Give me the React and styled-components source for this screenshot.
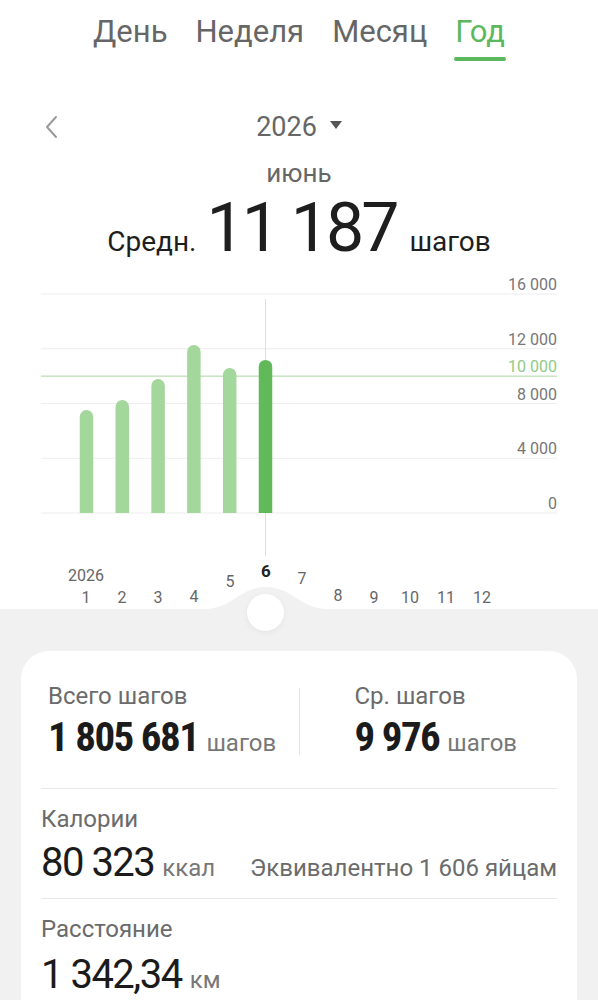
import React from 'react'
import styled, { createGlobalStyle } from 'styled-components'

const GlobalStyle = createGlobalStyle`
  * { box-sizing: border-box; }
  body {
    margin: 0;
    background: #fff;
    font-family: Roboto, "Noto Sans", sans-serif;
  }
`

const GREEN = '#5cb85c'

const Page = styled.div`
  width: 598px;
  height: 1000px;
  overflow: hidden;
`

const Tabs = styled.nav`
  display: flex;
  justify-content: center;
  gap: 28px;
  padding-top: 14px;
`

const Tab = styled.div`
  font-size: 31px;
  line-height: 36px;
  color: ${p => (p.$active ? GREEN : '#666')};
  padding-bottom: 11px;
  position: relative;

  &::after {
    content: '';
    display: ${p => (p.$active ? 'block' : 'none')};
    position: absolute;
    left: -1px;
    right: -1px;
    bottom: 0;
    height: 4px;
    border-radius: 2px;
    background: ${GREEN};
  }
`

const YearRow = styled.div`
  display: grid;
  grid-template-columns: 1fr auto 1fr;
  align-items: center;
  margin-top: 50px;
`

const BackButton = styled.div`
  padding-left: 44px;
  display: flex;
  align-items: center;
`

const YearPicker = styled.div`
  display: flex;
  align-items: center;
  gap: 13px;
  font-size: 27px;
  line-height: 32px;
  color: #666;
`

const Caret = styled.span`
  width: 0;
  height: 0;
  border-left: 6px solid transparent;
  border-right: 6px solid transparent;
  border-top: 8px solid #555;
  margin-top: -4px;
`

const MonthName = styled.div`
  margin-top: 15px;
  text-align: center;
  font-size: 26px;
  line-height: 30px;
  color: #666;
`

const AvgRow = styled.div`
  margin-top: 4px;
  display: flex;
  justify-content: center;
  align-items: baseline;
  gap: 10px;
  color: #1e1e1e;
  line-height: 72px;
`

const AvgCaption = styled.span`
  font-size: 28px;
`

const AvgValue = styled.span`
  font-size: 68px;
  letter-spacing: -3px;
  margin-right: 3px;
`

const ChartSvg = styled.svg`
  display: block;
  margin-top: -9px;
`

const Months = styled.div`
  display: grid;
  grid-template-columns: repeat(12, 36px);
  padding-left: 68px;
  height: 50px;
  align-items: end;
  padding-bottom: 2px;
  position: relative;
  z-index: 2;
`

const MonthCell = styled.div`
  display: flex;
  flex-direction: column;
  align-items: center;
  gap: 4px;
`

const MonthNum = styled.span`
  font-size: ${p => (p.$active ? '17px' : '16px')};
  font-weight: ${p => (p.$active ? 700 : 400)};
  line-height: 18px;
  color: ${p => (p.$active ? '#222' : '#666')};
`

const Sheet = styled.div`
  min-height: 420px;
  background: #f1f1f1;
  position: relative;
  padding: 42px 21px 0;
`

const Bump = styled.svg`
  position: absolute;
  left: 204px;
  top: -23px;
`

const Knob = styled.div`
  position: absolute;
  left: 247px;
  top: -15px;
  width: 37px;
  height: 37px;
  border-radius: 50%;
  background: #fff;
  box-shadow: 0 2px 6px rgba(0, 0, 0, 0.05);
`

const Card = styled.div`
  background: #fff;
  border-radius: 28px;
  padding: 0 20px 40px;
`

const StatsRow = styled.div`
  display: grid;
  grid-template-columns: 1fr 1px 1fr;
  padding: 31px 0 23px;
  border-bottom: 1px solid #e8e8e8;
`

const StatCol = styled.div`
  padding-left: ${p => p.$inset}px;
`

const VDivider = styled.div`
  background: #e6e6e6;
  margin: 6px 0 10px;
`

const Section = styled.div`
  padding: 16px 0 ${p => (p.$last ? 13 : 8)}px;
  border-bottom: ${p => (p.$last ? 'none' : '1px solid #e8e8e8')};
`

const Label = styled.div`
  font-size: 24px;
  line-height: 28px;
  color: #6b6b6b;
`

const ValueLine = styled.div`
  display: flex;
  align-items: baseline;
  gap: 8px;
  margin-top: ${p => p.$gap}px;
  line-height: 44px;
`

const BigBold = styled.span`
  font-family: "Liberation Sans Narrow", "Roboto Condensed", Roboto, sans-serif;
  font-weight: 700;
  font-size: 41px;
  letter-spacing: -1.5px;
  color: #1b1b1b;
`

const BigValue = styled.span`
  font-size: 40px;
  letter-spacing: -1.5px;
  color: #1b1b1b;
`

const Unit = styled.span`
  font-size: 24px;
  color: #777;
`

const Note = styled.span`
  margin-left: auto;
  font-size: 24px;
  color: #6b6b6b;
`

// monthly averages, Jan..Jun
const steps = [7530, 8250, 9790, 12270, 10590, 11187]
const selected = 5
const labelShift = [0, 0, 0, -1, -16, -27, -19, -2, 0, 0, 0, 0]

const MAX = 16000
const BASE = 244
const SCALE = 219 / MAX
const yOf = v => BASE - v * SCALE
const xOf = i => 86.5 + i * 35.8

const barPath = (cx, top, w) => {
  const r = w / 2
  const l = cx - r
  return `M${l} ${BASE} V${top + r} A${r} ${r} 0 0 1 ${l + w} ${top + r} V${BASE} Z`
}

const Chart = () => (
  <ChartSvg width="598" height="290" viewBox="0 0 598 290">
    {[0, 4000, 8000, 12000, 16000].map(v => (
      <g key={v}>
        <line x1="41" x2="557" y1={yOf(v)} y2={yOf(v)} stroke="#ededed" strokeWidth="1" />
        <text x="557" y={yOf(v) - 4} textAnchor="end" fontSize="16" fill="#777" fontFamily="Roboto">
          {v === 0 ? '0' : v.toLocaleString('ru-RU').replace(/\s/g, ' ')}
        </text>
      </g>
    ))}
    <line x1="41" x2="557" y1={yOf(10000)} y2={yOf(10000)} stroke="#a9d6a2" strokeWidth="1" />
    <text x="557" y={yOf(10000) - 4} textAnchor="end" fontSize="16" fill="#8fcb86" fontFamily="Roboto">
      10 000
    </text>
    <line x1={xOf(selected)} x2={xOf(selected)} y1="30" y2="287" stroke="#cfe9ca" strokeWidth="1" />
    {steps.map((v, i) => (
      <path key={i} d={barPath(xOf(i), yOf(v), 13.5)} fill={i === selected ? '#62b95a' : '#a4d79c'} />
    ))}
  </ChartSvg>
)

const App = () => (
  <Page>
    <GlobalStyle />
    <Tabs>
      <Tab>День</Tab>
      <Tab>Неделя</Tab>
      <Tab>Месяц</Tab>
      <Tab $active>Год</Tab>
    </Tabs>

    <YearRow>
      <BackButton>
        <svg width="14" height="24" viewBox="0 0 14 24">
          <polyline points="12,2 3,12 12,22" fill="none" stroke="#9a9a9a" strokeWidth="2" strokeLinecap="round" strokeLinejoin="round" />
        </svg>
      </BackButton>
      <YearPicker>
        2026
        <Caret />
      </YearPicker>
      <div />
    </YearRow>

    <MonthName>июнь</MonthName>
    <AvgRow>
      <AvgCaption>Средн.</AvgCaption>
      <AvgValue>11 187</AvgValue>
      <AvgCaption>шагов</AvgCaption>
    </AvgRow>

    <Chart />

    <Months>
      {labelShift.map((dy, i) => (
        <MonthCell key={i} style={{ transform: `translateY(${dy}px)` }}>
          {i === 0 && <MonthNum>2026</MonthNum>}
          <MonthNum $active={i === selected}>{i + 1}</MonthNum>
        </MonthCell>
      ))}
    </Months>

    <Sheet>
      <Bump width="124" height="26" viewBox="0 0 124 26">
        <path d="M0 23 C 28 23, 36 1, 62 1 C 88 1, 96 23, 124 23 V26 H0 Z" fill="#f1f1f1" />
      </Bump>
      <Knob />
      <Card>
        <StatsRow>
          <StatCol $inset={7}>
            <Label>Всего шагов</Label>
            <ValueLine $gap={5}>
              <BigBold>1 805 681</BigBold>
              <Unit>шагов</Unit>
            </ValueLine>
          </StatCol>
          <VDivider />
          <StatCol $inset={55}>
            <Label>Ср. шагов</Label>
            <ValueLine $gap={5}>
              <BigBold>9 976</BigBold>
              <Unit>шагов</Unit>
            </ValueLine>
          </StatCol>
        </StatsRow>

        <Section>
          <Label>Калории</Label>
          <ValueLine $gap={8}>
            <BigValue>80 323</BigValue>
            <Unit>ккал</Unit>
            <Note>Эквивалентно 1 606 яйцам</Note>
          </ValueLine>
        </Section>

        <Section $last>
          <Label>Расстояние</Label>
          <ValueLine $gap={10}>
            <BigValue>1 342,34</BigValue>
            <Unit>км</Unit>
          </ValueLine>
        </Section>
      </Card>
    </Sheet>
  </Page>
)

export default App
